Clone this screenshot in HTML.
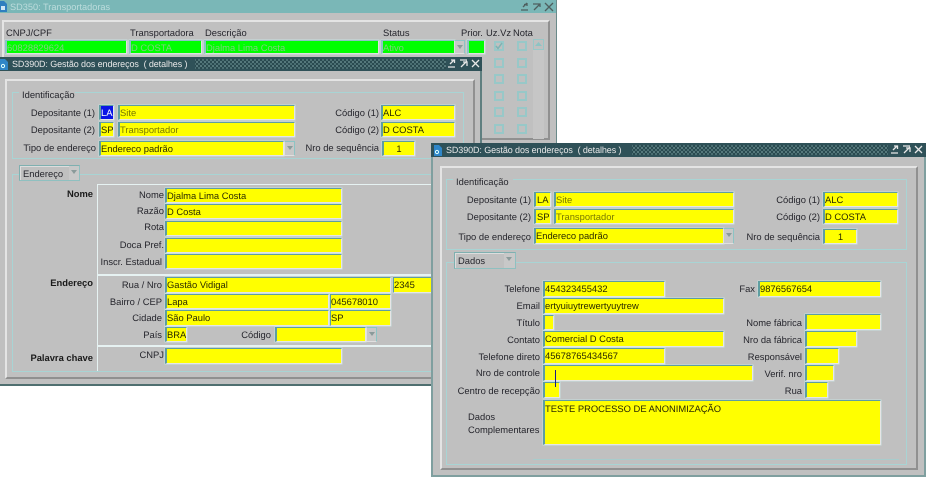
<!DOCTYPE html>
<html><head><meta charset="utf-8"><style>
html,body{margin:0;padding:0;background:#fff;width:926px;height:477px;overflow:hidden}
#p{position:absolute;left:0;top:0;width:926px;height:477px;overflow:hidden;font:9.4px "Liberation Sans",sans-serif;color:#222;text-rendering:geometricPrecision;filter:blur(.25px)}
#p div,#p svg{position:absolute}
.w{background:#c0c0c0;box-sizing:border-box}
.t{background:#2f5158;color:#e8e8e8;white-space:nowrap;line-height:15px;font-size:9px;letter-spacing:-.1px}
.dots{background-color:#2a4a50;background-image:radial-gradient(circle at 2px 2px,#7fa5a5 0,#7fa5a5 .6px,transparent 1px),radial-gradient(circle at 2px 2px,#6b9292 0,#6b9292 .6px,transparent 1px);background-size:4px 4px;background-position:0 1px,2px 3px;background-repeat:repeat}
.f{background:#ff0;box-sizing:border-box;border-top:1px solid #5f9ea0;border-left:2px solid #5f9ea0;border-right:1px solid #e6e6e6;border-bottom:1px solid #e6e6e6;box-shadow:0 0 0 .5px #c8e0e0;color:#2a2a00;padding-left:0;line-height:13px;white-space:nowrap;overflow:hidden;font-size:9.4px}
.g{background:#0f0;border-color:#8cc4c4 #e0e0e0 #e0e0e0 #8cc4c4;color:#7fd07f;line-height:13px}
.o{color:#7a7a00}
.l{left:0;text-align:right;white-space:nowrap;line-height:13px;color:#25252c}
.x{white-space:nowrap;line-height:13px;color:#25252c}
.b{font-weight:bold;color:#1a1a1a}
.fr{box-sizing:border-box;border:1px solid #a8d4d4}
.pn{box-sizing:border-box;border:2px solid;border-color:#e4e4e4 #909090 #909090 #e4e4e4}
.ln{background:#e6f2f2;height:1px}
.c{box-sizing:border-box;width:10px;height:10px;border:2px solid #98c8c8;background:#c0c0c0}
.dd{background:#c8c8c8;box-sizing:border-box;border:1px solid #e0e0e0;border-top-color:#8cc4c4;border-right-color:#8cc4c4}
.dd:after{content:"";position:absolute;left:2px;top:4px;border:3px solid transparent;border-top:4px solid #8a9a9a}
.tab{box-sizing:border-box;background:#c0c0c0;border:1px solid;border-color:#7fb0b0 #8fc0c0 #8fc0c0 #7fb0b0;box-shadow:1px 1px 0 #ddd inset;color:#25252c;line-height:15px;padding-left:3px}
</style></head><body><div id="p">

<!-- SD350 -->
<div class="w" style="left:0;top:0;width:557px;height:386px;border-right:1px solid #6a8a8a"></div>
<div style="left:0;top:0;width:556px;height:13px;background:#7ab7b7"></div>
<svg style="left:0;top:0" width="8" height="13"><path d="M0 1h4l3 3v8H0z" fill="#2f7fbf"/><rect x="1" y="6" width="4" height="4" fill="#cfe6f5"/></svg>
<div style="left:10px;top:1px;color:#bcdcdc;font-size:9.2px;line-height:13px">SD350: Transportadoras</div>
<svg style="left:520px;top:2px" width="34" height="10" fill="none" stroke="#4e5f5f" stroke-width="1.3"><path d="M1 8h7M3 5l4-4M4 2.500h3M7 1v3"/><path d="M13 2h7M14 8l6-6M17 2h3v3"/><path d="M25 1l8 8M33 1l-8 8"/></svg>
<div class="pn" style="left:2px;top:20px;width:548px;height:120px"></div>
<div class="x" style="left:6px;top:26px">CNPJ/CPF</div>
<div class="x" style="left:130px;top:26px">Transportadora</div>
<div class="x" style="left:205px;top:26px">Descrição</div>
<div class="x" style="left:383px;top:26px">Status</div>
<div class="x" style="left:461px;top:26px">Prior.</div>
<div class="x" style="left:486px;top:26px">Uz.Vz</div>
<div class="x" style="left:513px;top:26px">Nota</div>
<div class="f g" style="left:5px;top:40px;width:122px;height:14px">60828829624</div>
<div class="f g" style="left:129px;top:40px;width:73px;height:14px">D COSTA</div>
<div class="f g" style="left:204px;top:40px;width:175px;height:14px">Djalma Lima Costa</div>
<div class="f g" style="left:381px;top:40px;width:74px;height:14px">Ativo</div>
<div class="dd" style="left:454px;top:40px;width:11px;height:14px"></div>
<div class="f g" style="left:467px;top:40px;width:18px;height:14px"></div>
<div class="c" style="left:494px;top:41px"></div>
<svg style="left:495px;top:42px" width="8" height="8" fill="none" stroke="#7db4b4" stroke-width="1.5"><path d="M1 4l2 2.500L7 1"/></svg>
<div class="c" style="left:517px;top:41px"></div>
<div class="c" style="left:494px;top:58px"></div><div class="c" style="left:517px;top:58px"></div>
<div class="c" style="left:494px;top:74px"></div><div class="c" style="left:517px;top:74px"></div>
<div class="c" style="left:494px;top:91px"></div><div class="c" style="left:517px;top:91px"></div>
<div class="c" style="left:494px;top:107px"></div><div class="c" style="left:517px;top:107px"></div>
<div class="c" style="left:494px;top:124px"></div><div class="c" style="left:517px;top:124px"></div>
<div style="left:533px;top:39px;width:11px;height:100px;background:#c6c6c6"></div>
<div class="c" style="left:533px;top:39px;width:11px;height:11px;border-width:1px"></div>
<svg style="left:535px;top:41px" width="7" height="6"><path d="M0 5l3.500-4 3.500 4z" fill="#8cc4c4"/></svg>

<!-- SD390D back -->
<div class="w" style="left:0;top:57px;width:482px;height:329px;border-right:2px solid #5f7f80;border-bottom:2px solid #4f6f70"></div>
<div class="t" style="left:0;top:57px;width:482px;height:14px"></div>
<div class="dots" style="left:195px;top:59px;width:251px;height:10px"></div>
<svg style="left:0;top:58px" width="9" height="13"><path d="M0 1h5l3 3v8H0z" fill="#2f86c8"/><circle cx="3" cy="8" r="1.600" fill="none" stroke="#dff" stroke-width="1"/></svg>
<div class="t" style="left:12px;top:57px;height:14px;background:none">SD390D: Gestão dos endereços&nbsp; ( detalhes )</div>
<svg style="left:447px;top:58px" width="33" height="11" fill="none" stroke="#e8e8e8" stroke-width="1.300"><path d="M1 9h7M3 6l4-4M4 2h3.500v3"/><path d="M13 2h7M14 9l6-6M16 4h4v4"/><path d="M25 2l7 7M32 2l-7 7"/></svg>

<div class="pn" style="left:5px;top:79px;width:470px;height:300px"></div>
<div class="fr" style="left:12px;top:92px;width:452px;height:67px"></div>
<div style="left:19px;top:89px;width:56px;height:8px;background:#c0c0c0"></div>
<div class="x" style="left:22px;top:88px">Identificação</div>
<div class="l" style="width:95px;top:106px">Depositante (1)</div>
<div class="l" style="width:95px;top:123px">Depositante (2)</div>
<div class="l" style="width:96px;top:141px">Tipo de endereço</div>
<div class="f" style="left:99px;top:105px;width:15px;height:15px;padding:0"><div style="left:0;top:0;width:12px;height:13px;background:#0a14e6;color:#fff;line-height:13px">LA</div></div>
<div class="f o" style="left:118px;top:105px;width:177px;height:15px">Site</div>
<div class="f" style="left:99px;top:122px;width:15px;height:15px;padding:0">SP</div>
<div class="f o" style="left:118px;top:122px;width:177px;height:15px">Transportador</div>
<div class="f" style="left:99px;top:141px;width:185px;height:15px">Endereco padrão</div>
<div class="dd" style="left:284px;top:141px;width:11px;height:15px"></div>
<div class="l" style="width:379px;top:106px">Código (1)</div>
<div class="l" style="width:379px;top:123px">Código (2)</div>
<div class="l" style="width:379px;top:141px">Nro de sequência</div>
<div class="f" style="left:381px;top:105px;width:74px;height:15px">ALC</div>
<div class="f" style="left:381px;top:122px;width:74px;height:15px">D COSTA</div>
<div class="f" style="left:382px;top:141px;width:33px;height:15px;text-align:center;padding:0">1</div>

<div class="fr" style="left:12px;top:174px;width:470px;height:198px;border-right:0"></div>
<div class="tab" style="left:19px;top:165px;width:61px;height:16px">Endereço</div>
<div class="dd" style="left:69px;top:166px;width:10px;height:14px;border:0"></div>
<div class="ln" style="left:97px;top:184px;width:385px"></div>
<div style="left:97px;top:184px;width:1px;height:187px;background:#e6f2f2"></div>
<div class="ln" style="left:97px;top:274px;width:385px;height:2px"></div>
<div class="ln" style="left:97px;top:345px;width:385px;height:2px"></div>
<div class="l b" style="width:93px;top:187px">Nome</div>
<div class="l b" style="width:93px;top:276px">Endereço</div>
<div class="l b" style="width:93px;top:351px">Palavra chave</div>
<div class="l" style="width:164px;top:188px">Nome</div>
<div class="l" style="width:164px;top:204px">Razão</div>
<div class="l" style="width:164px;top:220px">Rota</div>
<div class="l" style="width:164px;top:238px">Doca Pref.</div>
<div class="l" style="width:162px;top:255px">Inscr. Estadual</div>
<div class="l" style="width:162px;top:278px">Rua / Nro</div>
<div class="l" style="width:162px;top:295px">Bairro / CEP</div>
<div class="l" style="width:162px;top:311px">Cidade</div>
<div class="l" style="width:162px;top:328px">País</div>
<div class="l" style="width:271px;top:328px">Código</div>
<div class="l" style="width:164px;top:348px">CNPJ</div>
<div class="f" style="left:165px;top:188px;width:177px;height:15px">Djalma Lima Costa</div>
<div class="f" style="left:165px;top:204px;width:177px;height:15px">D Costa</div>
<div class="f" style="left:165px;top:221px;width:177px;height:15px"></div>
<div class="f" style="left:165px;top:238px;width:177px;height:15px"></div>
<div class="f" style="left:165px;top:254px;width:177px;height:15px"></div>
<div class="f" style="left:165px;top:277px;width:226px;height:16px">Gastão Vidigal</div>
<div class="f" style="left:393px;top:277px;width:40px;height:16px;border-left-width:1px">2345</div>
<div class="f" style="left:165px;top:294px;width:164px;height:15px">Lapa</div>
<div class="f" style="left:330px;top:294px;width:61px;height:15px;border-left-width:1px">045678010</div>
<div class="f" style="left:165px;top:310px;width:164px;height:16px">São Paulo</div>
<div class="f" style="left:330px;top:310px;width:61px;height:16px;border-left-width:1px">SP</div>
<div class="f" style="left:165px;top:327px;width:22px;height:15px;padding:0">BRA</div>
<div class="f" style="left:275px;top:327px;width:91px;height:15px"></div>
<div class="dd" style="left:366px;top:327px;width:11px;height:15px"></div>
<div class="f" style="left:165px;top:348px;width:177px;height:16px"></div>

<!-- SD390D front -->
<div class="w" style="left:431px;top:143px;width:495px;height:334px;border:2px solid #7f9f9f;border-top:0"></div>
<div class="t" style="left:431px;top:143px;width:495px;height:14px"></div>
<div class="dots" style="left:632px;top:145px;width:256px;height:10px"></div>
<svg style="left:434px;top:144px" width="9" height="13"><path d="M0 1h5l3 3v8H0z" fill="#2f86c8"/><circle cx="3" cy="8" r="1.600" fill="none" stroke="#dff" stroke-width="1"/></svg>
<div class="t" style="left:446px;top:143px;height:14px;background:none">SD390D: Gestão dos endereços&nbsp; ( detalhes )</div>
<svg style="left:890px;top:144px" width="33" height="11" fill="none" stroke="#e8e8e8" stroke-width="1.300"><path d="M1 9h7M3 6l4-4M4 2h3.500v3"/><path d="M13 2h7M14 9l6-6M16 4h4v4"/><path d="M25 2l7 7M32 2l-7 7"/></svg>

<div class="pn" style="left:440px;top:166px;width:478px;height:304px"></div>
<div class="fr" style="left:446px;top:179px;width:461px;height:71px"></div>
<div style="left:453px;top:176px;width:60px;height:8px;background:#c0c0c0"></div>
<div class="x" style="left:456px;top:175px">Identificação</div>
<div class="l" style="width:531px;top:193px">Depositante (1)</div>
<div class="l" style="width:531px;top:210px">Depositante (2)</div>
<div class="l" style="width:531px;top:230px">Tipo de endereço</div>
<div class="f" style="left:534px;top:192px;width:17px;height:15px;padding:0 0 0 1px">LA</div>
<div class="f o" style="left:554px;top:192px;width:180px;height:15px">Site</div>
<div class="f" style="left:534px;top:209px;width:17px;height:15px;padding:0 0 0 1px">SP</div>
<div class="f o" style="left:554px;top:209px;width:180px;height:15px">Transportador</div>
<div class="f" style="left:534px;top:228px;width:190px;height:16px">Endereco padrão</div>
<div class="dd" style="left:723px;top:228px;width:11px;height:16px"></div>
<div class="l" style="width:820px;top:193px">Código (1)</div>
<div class="l" style="width:820px;top:210px">Código (2)</div>
<div class="l" style="width:820px;top:230px">Nro de sequência</div>
<div class="f" style="left:823px;top:192px;width:75px;height:15px">ALC</div>
<div class="f" style="left:823px;top:209px;width:75px;height:15px">D COSTA</div>
<div class="f" style="left:823px;top:229px;width:34px;height:15px;text-align:center;padding:0">1</div>

<div class="fr" style="left:446px;top:262px;width:461px;height:203px"></div>
<div class="tab" style="left:454px;top:252px;width:62px;height:17px">Dados</div>
<div class="dd" style="left:504px;top:253px;width:11px;height:15px;border:0"></div>
<div class="ln" style="left:533px;top:459px;width:366px;background:#a8cccc"></div>

<div class="l" style="width:540px;top:282px">Telefone</div>
<div class="l" style="width:540px;top:299px">Email</div>
<div class="l" style="width:540px;top:316px">Título</div>
<div class="l" style="width:540px;top:333px">Contato</div>
<div class="l" style="width:540px;top:350px">Telefone direto</div>
<div class="l" style="width:540px;top:366px">Nro de controle</div>
<div class="l" style="width:540px;top:384px">Centro de recepção</div>
<div class="x" style="left:468px;top:410px">Dados</div>
<div class="x" style="left:468px;top:423px">Complementares</div>
<div class="f" style="left:543px;top:281px;width:122px;height:16px">454323455432</div>
<div class="f" style="left:543px;top:298px;width:181px;height:16px">ertyuiuytrewertyuytrew</div>
<div class="f" style="left:543px;top:315px;width:11px;height:15px"></div>
<div class="f" style="left:543px;top:331px;width:181px;height:16px">Comercial D Costa</div>
<div class="f" style="left:543px;top:348px;width:122px;height:16px">45678765434567</div>
<div class="f" style="left:543px;top:365px;width:210px;height:16px"></div>
<div class="f" style="left:543px;top:382px;width:17px;height:16px"></div>
<div class="f" style="left:543px;top:400px;width:338px;height:45px;padding-top:1px">TESTE PROCESSO DE ANONIMIZAÇÃO</div>
<div style="left:555px;top:370px;width:1px;height:17px;background:#1a1a8a"></div>
<div class="l" style="width:755px;top:282px">Fax</div>
<div class="l" style="width:802px;top:316px">Nome fábrica</div>
<div class="l" style="width:802px;top:333px">Nro da fábrica</div>
<div class="l" style="width:802px;top:350px">Responsável</div>
<div class="l" style="width:802px;top:367px">Verif. nro</div>
<div class="l" style="width:802px;top:384px">Rua</div>
<div class="f" style="left:758px;top:281px;width:123px;height:16px">9876567654</div>
<div class="f" style="left:805px;top:314px;width:76px;height:16px"></div>
<div class="f" style="left:805px;top:331px;width:52px;height:16px"></div>
<div class="f" style="left:805px;top:348px;width:34px;height:16px"></div>
<div class="f" style="left:805px;top:365px;width:29px;height:16px"></div>
<div class="f" style="left:805px;top:382px;width:23px;height:16px"></div>
</div></body></html>
